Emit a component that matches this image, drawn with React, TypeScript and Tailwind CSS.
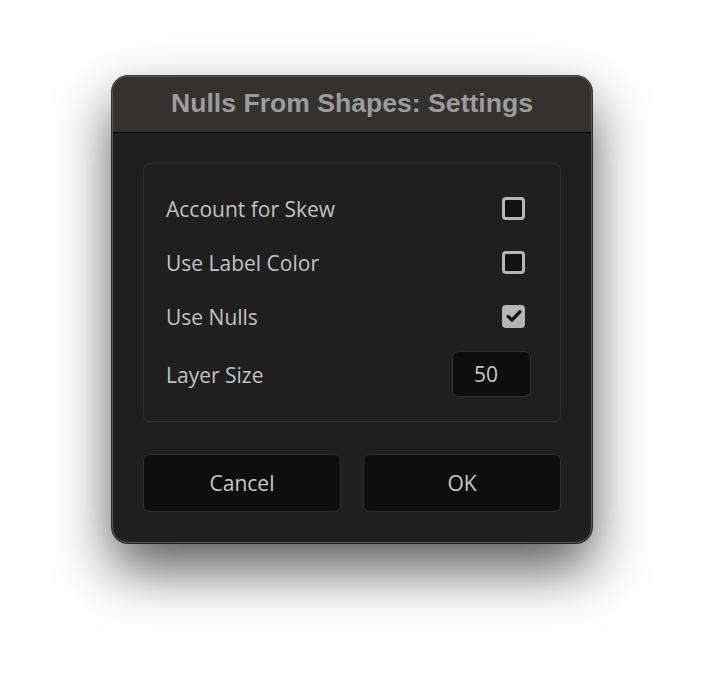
import React from "react";

// Checkbox rows in the settings panel
interface Option {
  label: string;
  checked: boolean;
}

const options: Option[] = [
  { label: "Account for Skew", checked: false },
  { label: "Use Label Color", checked: false },
  { label: "Use Nulls", checked: true },
];

const CheckBox: React.FC<{ checked: boolean }> = ({ checked }) => (
  <div
    className={
      checked
        ? "mr-[6px] flex h-[23px] w-[23px] items-center justify-center rounded-[4px] bg-[#b5b5b5]"
        : "mr-[6px] h-[23px] w-[23px] rounded-[4px] border-[3px] border-[#b5b5b5] bg-[#111111]"
    }
  >
    {checked && (
      <svg viewBox="0 0 24 24" className="h-[20px] w-[20px]" fill="none">
        <path
          d="M5 12.5l4.5 4.5L19 7"
          stroke="#141414"
          strokeWidth={4}
          strokeLinecap="round"
          strokeLinejoin="round"
        />
      </svg>
    )}
  </div>
);

const App: React.FC = () => {
  return (
    <div className="h-[692px] w-[704px] bg-white pt-[76px]">
      <div className="mx-auto w-[480px] overflow-hidden rounded-[16px] border border-[#585858] bg-[#1f1f1f] shadow-[0_0_0_1px_rgba(0,0,0,0.75),0_26px_55px_rgba(0,0,0,0.65)]">
        {/* Title bar */}
        <div className="flex h-[56px] items-center justify-center border-b border-black bg-[#333231] pb-[2px]">
          <h1 className="font-['Liberation_Sans',Arial,sans-serif] text-[26.6px] font-bold text-[#9c9c9c]">
            Nulls From Shapes: Settings
          </h1>
        </div>

        {/* Body */}
        <div className="px-[30px] pt-[30px] pb-[30px] font-['Open_Sans',sans-serif]">
          <div className="rounded-[7px] border border-[#303030] pt-[17px] pr-[29px] pb-[24px] pl-[22px]">
            {options.map((option) => (
              <div key={option.label} className="flex h-[54px] items-center justify-between">
                <span className="pt-[3px] text-[21px] text-[#c2c2c2]">{option.label}</span>
                <CheckBox checked={option.checked} />
              </div>
            ))}
            <div className="mt-[8px] flex h-[46px] items-center justify-between">
              <span className="pt-[3px] text-[21px] text-[#c2c2c2]">Layer Size</span>
              <div className="flex h-[46px] w-[79px] items-center rounded-[7px] border border-[#303030] bg-[#0e0e0e] pl-[21px] pt-[2px] text-[21px] text-[#c8c8c8]">
                50
              </div>
            </div>
          </div>

          {/* Buttons */}
          <div className="mt-[32px] flex gap-[22px]">
            <button className="h-[58px] flex-1 rounded-[7px] border border-[#303030] bg-[#0e0e0e] pt-[2px] text-[21px] text-[#c8c8c8]">
              Cancel
            </button>
            <button className="h-[58px] flex-1 rounded-[7px] border border-[#303030] bg-[#0e0e0e] pt-[2px] text-[21px] text-[#c8c8c8]">
              OK
            </button>
          </div>
        </div>
      </div>
    </div>
  );
};

export default App;
